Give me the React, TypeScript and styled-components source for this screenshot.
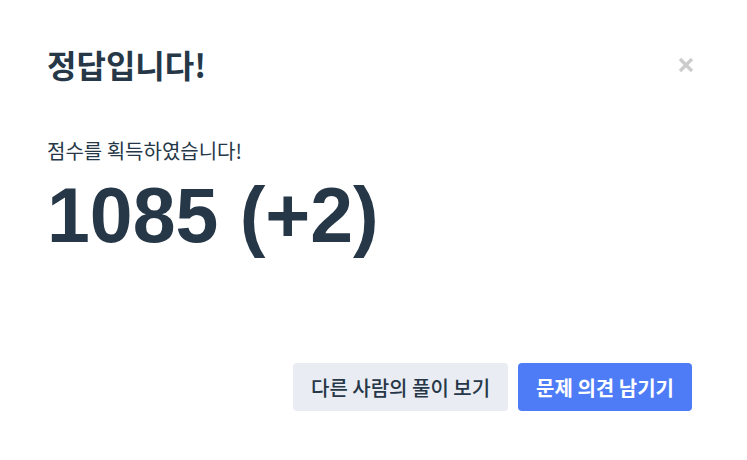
import React from 'react';
import styled, { createGlobalStyle } from 'styled-components';

const GlobalStyle = createGlobalStyle`
  html, body {
    margin: 0;
    padding: 0;
    background: #ffffff;
  }
  body {
    font-family: 'Noto Sans CJK KR', 'Noto Sans', sans-serif;
    color: #263747;
  }
`;

const Modal = styled.div`
  width: 747px;
  height: 460px;
  box-sizing: border-box;
  padding: 40px 55px 49px 47px;
  display: flex;
  flex-direction: column;
  background: #ffffff;
`;

const Header = styled.div`
  display: flex;
  align-items: center;
  justify-content: space-between;
`;

const Title = styled.h2`
  margin: 0;
  font-size: 32px;
  font-weight: 700;
  line-height: 48px;
  color: #263747;
`;

const CloseButton = styled.button`
  border: none;
  background: none;
  padding: 0;
  width: 16px;
  height: 16px;
  margin-top: 2px;
  margin-right: -2px;
  display: flex;
  align-items: center;
  justify-content: center;
  cursor: pointer;
`;

const Body = styled.div`
  flex: 1;
  padding-top: 48px;
`;

const Sub = styled.p`
  margin: 0;
  font-size: 20px;
  line-height: 30px;
  color: #263747;
`;

const Score = styled.div`
  margin-top: 4px;
  font-family: 'Liberation Sans', 'Noto Sans CJK KR', sans-serif;
  font-size: 77px;
  font-weight: 700;
  line-height: 90px;
  color: #263747;
`;

const Footer = styled.div`
  display: flex;
  justify-content: flex-end;
  gap: 10px;
`;

const Button = styled.button<{ $primary?: boolean }>`
  height: 48px;
  padding: 0 18px;
  border: none;
  border-radius: 4px;
  font-family: 'Noto Sans CJK KR', sans-serif;
  font-size: 20px;
  font-weight: ${(p) => (p.$primary ? 700 : 500)};
  background: ${(p) => (p.$primary ? '#4d7cf6' : '#e9ecf3')};
  color: ${(p) => (p.$primary ? '#ffffff' : '#263747')};
  cursor: pointer;
`;

const App = (): JSX.Element => (
  <>
    <GlobalStyle />
    <Modal>
      <Header>
        <Title>정답입니다!</Title>
        <CloseButton type="button" aria-label="닫기">
          <svg width="16" height="16" viewBox="0 0 16 16">
            <path d="M2 2 L14 14 M14 2 L2 14" stroke="#cccccc" strokeWidth="3.2" />
          </svg>
        </CloseButton>
      </Header>
      <Body>
        <Sub>점수를 획득하였습니다!</Sub>
        <Score>1085 (+2)</Score>
      </Body>
      <Footer>
        <Button type="button">다른 사람의 풀이 보기</Button>
        <Button type="button" $primary>문제 의견 남기기</Button>
      </Footer>
    </Modal>
  </>
);

export default App;
